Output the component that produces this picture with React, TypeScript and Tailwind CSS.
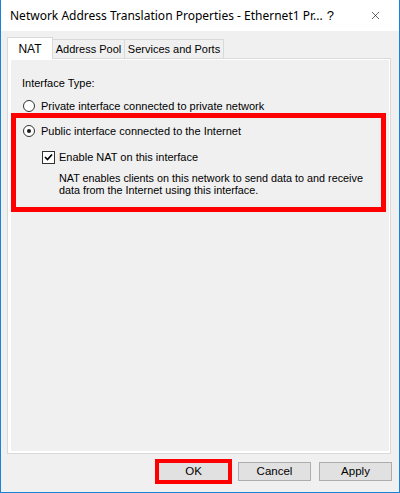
import { X } from "lucide-react";

const font = { fontFamily: '"Liberation Sans", Arial, sans-serif' };

function Radio({ checked }: { checked?: boolean }) {
  return (
    <span className="flex h-[12px] w-[12px] shrink-0 items-center justify-center rounded-full border border-[#333333] bg-white">
      {checked && <span className="h-[4px] w-[4px] rounded-full bg-[#1a1a1a]" />}
    </span>
  );
}

function Checkbox() {
  return (
    <span className="flex h-[13px] w-[13px] shrink-0 items-center justify-center border border-[#333333] bg-white">
      <svg width="9" height="8" viewBox="0 0 9 8">
        <path d="M1 4 L3.5 6.5 L8 1.5" fill="none" stroke="#000" strokeWidth="1.7" />
      </svg>
    </span>
  );
}

function Tab({ label, width, active }: { label: string; width: string; active?: boolean }) {
  if (active) {
    return (
      <div
        className={`relative z-10 -mb-px flex h-[22px] items-center justify-center border border-b-0 border-[#d9d9d9] bg-white text-[12px] ${width}`}
      >
        {label}
      </div>
    );
  }
  return (
    <div
      className={`-ml-px flex h-[19px] items-center justify-center border border-b-0 border-[#d9d9d9] bg-[#f0f0f0] pt-[1px] text-[11px] ${width}`}
    >
      {label}
    </div>
  );
}

export default function App() {
  return (
    <div
      className="flex h-[493px] w-[400px] flex-col border-x border-b border-[#1883d7] bg-[#f0f0f0] text-black"
      style={font}
    >
      <div className="flex h-[31px] items-center bg-white pl-[9px]">
        <span
          className="text-[12px] whitespace-nowrap"
          style={{ fontFamily: '"Noto Sans", "Open Sans", sans-serif' }}
        >
          Network Address Translation Properties - Ethernet1 Pr...
        </span>
        <span className="ml-auto mr-[35px] text-[13px]">?</span>
        <X size={13} strokeWidth={1.1} className="mr-[17px]" />
      </div>

      <div className="flex flex-1 flex-col px-[6px] pt-[6px]">
        <div className="flex items-end">
          <Tab label="NAT" width="w-[46px]" active />
          <Tab label="Address Pool" width="w-[73px]" />
          <Tab label="Services and Ports" width="w-[100px]" />
        </div>

        <div className="flex h-[396px] w-[384px] flex-col border border-[#d9d9d9] bg-white pt-px pr-px pb-[2px] pl-[3px]">
          <div className="flex flex-1 flex-col bg-[#f0f0f0] pt-[16px] text-[11px]">
            <div className="pl-[11px] leading-[14px]">Interface Type:</div>

            <div className="mt-[9px] flex items-center gap-[6px] pl-[12px] leading-[14px]">
              <Radio />
              <span>Private interface connected to private network</span>
            </div>

            <div className="mr-[3px] border-[5px] border-[#ff0000] pt-[6px] pb-[11px] pl-[7px]">
              <div className="flex items-center gap-[6px] leading-[14px]">
                <Radio checked />
                <span>Public interface connected to the Internet</span>
              </div>
              <div className="mt-[12px] ml-[19px] flex items-center gap-[4px] leading-[14px]">
                <Checkbox />
                <span>Enable NAT on this interface</span>
              </div>
              <p className="mt-[8px] ml-[36px] text-[10.8px] leading-[12px]">
                NAT enables clients on this network to send data to and receive
                <br />
                data from the Internet using this interface.
              </p>
            </div>
          </div>
        </div>

        <div className="mt-[5px] flex items-center justify-end pr-[1px] text-[11.5px]">
          <div className="border-[4px] border-[#ff0000]">
            <button className="flex h-[17px] w-[69px] items-center justify-center bg-[#e1e1e1]">
              OK
            </button>
          </div>
          <button className="ml-[6px] flex h-[19px] w-[73px] items-center justify-center border border-[#adadad] bg-[#e1e1e1]">
            Cancel
          </button>
          <button className="ml-[8px] flex h-[19px] w-[73px] items-center justify-center border border-[#adadad] bg-[#e1e1e1]">
            Apply
          </button>
        </div>
      </div>
    </div>
  );
}
